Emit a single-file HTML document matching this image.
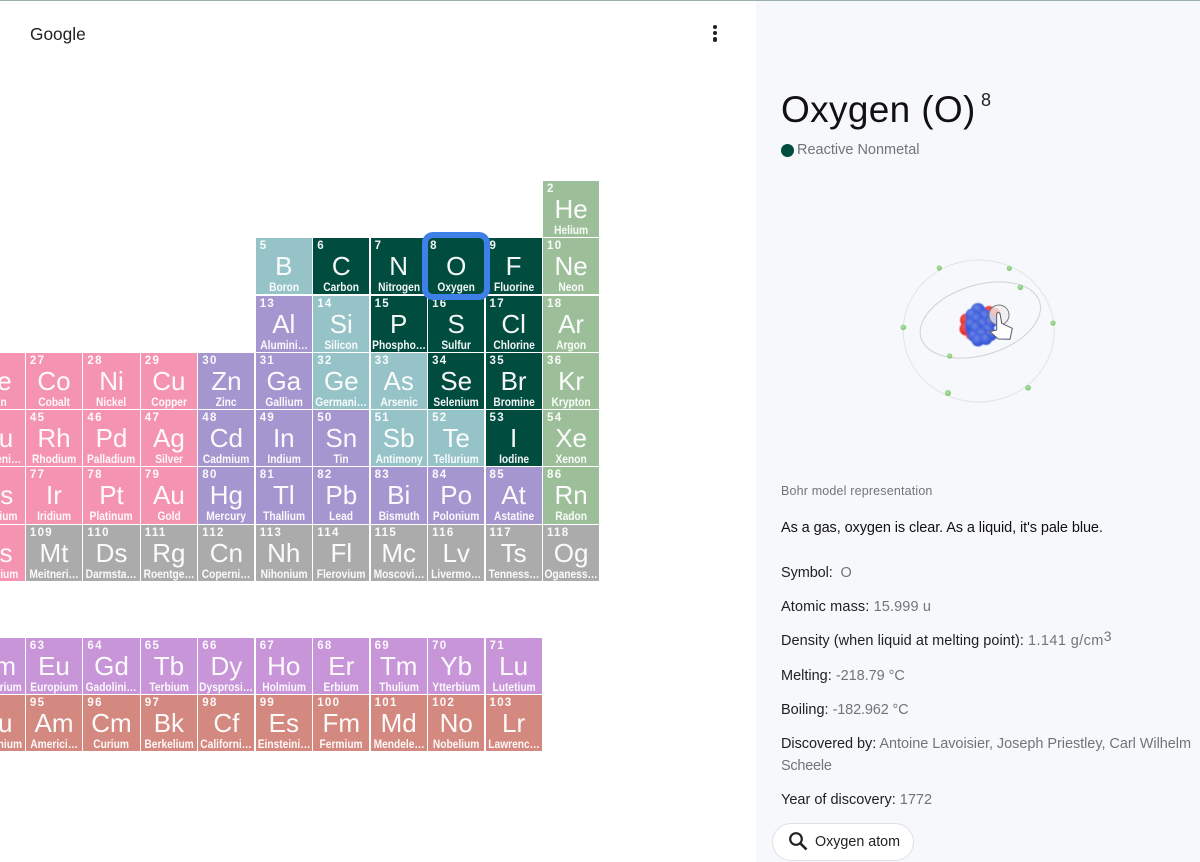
<!DOCTYPE html>
<html><head><meta charset="utf-8"><title>Oxygen</title>
<style>
html,body{margin:0;padding:0;width:1200px;height:862px;overflow:hidden;background:#fff;font-family:"Liberation Sans",sans-serif}
#top{position:absolute;left:0;top:0;width:1200px;height:1px;background:#9aafb0;z-index:5}
#g{position:absolute;left:30px;top:24px;font-size:17.3px;line-height:20px;color:#202124}
.dot{position:absolute;left:712.7px;width:4.6px;height:4.6px;border-radius:50%;background:#202124}
#panel{position:absolute;left:756px;top:0;width:444px;height:862px;background:#f7f8fb}
.c{position:absolute;width:56.2px;height:56.2px;color:#fff}
.c b{position:absolute;left:4px;top:2px;font:700 11.5px/13px "Liberation Sans",sans-serif;letter-spacing:1.3px;opacity:.95}
.c i{position:absolute;left:0;width:56.2px;top:13px;text-align:center;font:400 26px/30px "Liberation Sans",sans-serif;opacity:.96}
.c u{position:absolute;left:-7px;width:70.2px;top:42px;text-align:center;text-decoration:none;font:700 12px/14px "Liberation Sans",sans-serif;transform:scaleX(.85);white-space:nowrap;opacity:.95}
.k0{left:543px}.k1{left:485.5px}.k2{left:428.1px}.k3{left:370.6px}.k4{left:313.2px}.k5{left:255.7px}.k6{left:198.3px}.k7{left:140.8px}.k8{left:83.4px}.k9{left:25.9px}.k10{left:-31.5px}
.r0{top:181px}.r1{top:238.2px}.r2{top:295.5px}.r3{top:352.8px}.r4{top:410.1px}.r5{top:467.4px}.r6{top:524.7px}.r8{top:638px}.r9{top:695.2px}
.pk{background:#f594b0}.pu{background:#a596cf}.te{background:#95c3c7}.dk{background:#004d40}.gn{background:#9cbf9a}.gy{background:#ababab}.la{background:#c795d8}.ac{background:#d38880}
#sel{position:absolute;left:422px;top:232px;width:56px;height:56px;border:6px solid #3f80e8;border-radius:11px;z-index:3}
.t{position:absolute;left:781px;font-size:14.5px;line-height:20px;color:#202124;white-space:nowrap}
.t span{color:#70757a}
sup{font-size:14px;line-height:0;vertical-align:baseline;position:relative;top:-4px;letter-spacing:0}
</style></head><body>
<div id="top"></div>
<div id="g">Google</div>
<div class="dot" style="top:24.5px"></div><div class="dot" style="top:30.7px"></div><div class="dot" style="top:37px"></div>
<div id="panel"></div>

<div class="c k0 r0 gn"><b>2</b><i>He</i><u>Helium</u></div>

<div class="c k5 r1 te"><b>5</b><i>B</i><u>Boron</u></div>
<div class="c k4 r1 dk"><b>6</b><i>C</i><u>Carbon</u></div>
<div class="c k3 r1 dk"><b>7</b><i>N</i><u>Nitrogen</u></div>
<div class="c k2 r1 dk"><b style="left:2px">8</b><i>O</i><u>Oxygen</u></div>
<div class="c k1 r1 dk"><b>9</b><i>F</i><u>Fluorine</u></div>
<div class="c k0 r1 gn"><b>10</b><i>Ne</i><u>Neon</u></div>

<div class="c k5 r2 pu"><b>13</b><i>Al</i><u>Alumini…</u></div>
<div class="c k4 r2 te"><b>14</b><i>Si</i><u>Silicon</u></div>
<div class="c k3 r2 dk"><b>15</b><i>P</i><u>Phospho…</u></div>
<div class="c k2 r2 dk"><b>16</b><i>S</i><u>Sulfur</u></div>
<div class="c k1 r2 dk"><b>17</b><i>Cl</i><u>Chlorine</u></div>
<div class="c k0 r2 gn"><b>18</b><i>Ar</i><u>Argon</u></div>

<div class="c k10 r3 pk"><b>26</b><i>Fe</i><u>Iron</u></div>
<div class="c k9 r3 pk"><b>27</b><i>Co</i><u>Cobalt</u></div>
<div class="c k8 r3 pk"><b>28</b><i>Ni</i><u>Nickel</u></div>
<div class="c k7 r3 pk"><b>29</b><i>Cu</i><u>Copper</u></div>
<div class="c k6 r3 pu"><b>30</b><i>Zn</i><u>Zinc</u></div>
<div class="c k5 r3 pu"><b>31</b><i>Ga</i><u>Gallium</u></div>
<div class="c k4 r3 te"><b>32</b><i>Ge</i><u>Germani…</u></div>
<div class="c k3 r3 te"><b>33</b><i>As</i><u>Arsenic</u></div>
<div class="c k2 r3 dk"><b>34</b><i>Se</i><u>Selenium</u></div>
<div class="c k1 r3 dk"><b>35</b><i>Br</i><u>Bromine</u></div>
<div class="c k0 r3 gn"><b>36</b><i>Kr</i><u>Krypton</u></div>

<div class="c k10 r4 pk"><b>44</b><i>Ru</i><u>Rutheni…</u></div>
<div class="c k9 r4 pk"><b>45</b><i>Rh</i><u>Rhodium</u></div>
<div class="c k8 r4 pk"><b>46</b><i>Pd</i><u>Palladium</u></div>
<div class="c k7 r4 pk"><b>47</b><i>Ag</i><u>Silver</u></div>
<div class="c k6 r4 pu"><b>48</b><i>Cd</i><u>Cadmium</u></div>
<div class="c k5 r4 pu"><b>49</b><i>In</i><u>Indium</u></div>
<div class="c k4 r4 pu"><b>50</b><i>Sn</i><u>Tin</u></div>
<div class="c k3 r4 te"><b>51</b><i>Sb</i><u>Antimony</u></div>
<div class="c k2 r4 te"><b>52</b><i>Te</i><u>Tellurium</u></div>
<div class="c k1 r4 dk"><b>53</b><i>I</i><u>Iodine</u></div>
<div class="c k0 r4 gn"><b>54</b><i>Xe</i><u>Xenon</u></div>

<div class="c k10 r5 pk"><b>76</b><i>Os</i><u>Osmium</u></div>
<div class="c k9 r5 pk"><b>77</b><i>Ir</i><u>Iridium</u></div>
<div class="c k8 r5 pk"><b>78</b><i>Pt</i><u>Platinum</u></div>
<div class="c k7 r5 pk"><b>79</b><i>Au</i><u>Gold</u></div>
<div class="c k6 r5 pu"><b>80</b><i>Hg</i><u>Mercury</u></div>
<div class="c k5 r5 pu"><b>81</b><i>Tl</i><u>Thallium</u></div>
<div class="c k4 r5 pu"><b>82</b><i>Pb</i><u>Lead</u></div>
<div class="c k3 r5 pu"><b>83</b><i>Bi</i><u>Bismuth</u></div>
<div class="c k2 r5 pu"><b>84</b><i>Po</i><u>Polonium</u></div>
<div class="c k1 r5 pu"><b>85</b><i>At</i><u>Astatine</u></div>
<div class="c k0 r5 gn"><b>86</b><i>Rn</i><u>Radon</u></div>

<div class="c k10 r6 pk"><b>108</b><i>Hs</i><u>Hassium</u></div>
<div class="c k9 r6 gy"><b>109</b><i>Mt</i><u>Meitneri…</u></div>
<div class="c k8 r6 gy"><b>110</b><i>Ds</i><u>Darmsta…</u></div>
<div class="c k7 r6 gy"><b>111</b><i>Rg</i><u>Roentge…</u></div>
<div class="c k6 r6 gy"><b>112</b><i>Cn</i><u>Coperni…</u></div>
<div class="c k5 r6 gy"><b>113</b><i>Nh</i><u>Nihonium</u></div>
<div class="c k4 r6 gy"><b>114</b><i>Fl</i><u>Flerovium</u></div>
<div class="c k3 r6 gy"><b>115</b><i>Mc</i><u>Moscovi…</u></div>
<div class="c k2 r6 gy"><b>116</b><i>Lv</i><u>Livermo…</u></div>
<div class="c k1 r6 gy"><b>117</b><i>Ts</i><u>Tenness…</u></div>
<div class="c k0 r6 gy"><b>118</b><i>Og</i><u>Oganess…</u></div>

<div class="c k10 r8 la"><b>62</b><i>Sm</i><u>Samarium</u></div>
<div class="c k9 r8 la"><b>63</b><i>Eu</i><u>Europium</u></div>
<div class="c k8 r8 la"><b>64</b><i>Gd</i><u>Gadolini…</u></div>
<div class="c k7 r8 la"><b>65</b><i>Tb</i><u>Terbium</u></div>
<div class="c k6 r8 la"><b>66</b><i>Dy</i><u>Dysprosi…</u></div>
<div class="c k5 r8 la"><b>67</b><i>Ho</i><u>Holmium</u></div>
<div class="c k4 r8 la"><b>68</b><i>Er</i><u>Erbium</u></div>
<div class="c k3 r8 la"><b>69</b><i>Tm</i><u>Thulium</u></div>
<div class="c k2 r8 la"><b>70</b><i>Yb</i><u>Ytterbium</u></div>
<div class="c k1 r8 la"><b>71</b><i>Lu</i><u>Lutetium</u></div>

<div class="c k10 r9 ac"><b>94</b><i>Pu</i><u>Plutonium</u></div>
<div class="c k9 r9 ac"><b>95</b><i>Am</i><u>Americi…</u></div>
<div class="c k8 r9 ac"><b>96</b><i>Cm</i><u>Curium</u></div>
<div class="c k7 r9 ac"><b>97</b><i>Bk</i><u>Berkelium</u></div>
<div class="c k6 r9 ac"><b>98</b><i>Cf</i><u>Californi…</u></div>
<div class="c k5 r9 ac"><b>99</b><i>Es</i><u>Einsteini…</u></div>
<div class="c k4 r9 ac"><b>100</b><i>Fm</i><u>Fermium</u></div>
<div class="c k3 r9 ac"><b>101</b><i>Md</i><u>Mendele…</u></div>
<div class="c k2 r9 ac"><b>102</b><i>No</i><u>Nobelium</u></div>
<div class="c k1 r9 ac"><b>103</b><i>Lr</i><u>Lawrenc…</u></div>

<div id="sel"></div>

<div style="position:absolute;left:781px;top:88px;font-size:37px;line-height:44px;letter-spacing:.35px;color:#111;white-space:nowrap">Oxygen (O)</div>
<div style="position:absolute;left:981px;top:90px;font-size:18px;line-height:20px;color:#202124">8</div>
<div style="position:absolute;left:781px;top:143.5px;width:13px;height:13px;border-radius:50%;background:#004d40"></div>
<div class="t" style="left:797px;top:140px;color:#70757a">Reactive Nonmetal</div>

<svg style="position:absolute;left:880px;top:240px" width="200" height="180" viewBox="880 240 200 180">
<defs>
<radialGradient id="bl" cx=".4" cy=".35" r=".7"><stop offset="0" stop-color="#6c86e6"/><stop offset=".6" stop-color="#3f5edb"/><stop offset="1" stop-color="#3150d4"/></radialGradient>
<radialGradient id="rd" cx=".4" cy=".35" r=".7"><stop offset="0" stop-color="#f0554b"/><stop offset="1" stop-color="#e0201a"/></radialGradient>
<radialGradient id="el" cx=".45" cy=".4" r=".6"><stop offset="0" stop-color="#b5e3a6"/><stop offset="1" stop-color="#76c46a"/></radialGradient>
<filter id="sf" x="-20%" y="-20%" width="140%" height="140%"><feGaussianBlur stdDeviation=".6"/></filter>
</defs>
<ellipse cx="978.7" cy="331" rx="75.5" ry="71" fill="none" stroke="#e1e4e5" stroke-width="1"/>
<ellipse cx="980.3" cy="320" rx="62" ry="35" transform="rotate(-17 980.3 320)" fill="none" stroke="#cfd2d3" stroke-width="1"/>
<g fill="url(#el)">
<circle cx="939.3" cy="268" r="2.6"/><circle cx="1009.3" cy="268.3" r="2.6"/><circle cx="1020.3" cy="287.3" r="2.8"/><circle cx="1053" cy="323" r="2.6"/><circle cx="1028" cy="387.7" r="2.8"/><circle cx="948" cy="393" r="3"/><circle cx="903.3" cy="327.3" r="2.8"/><circle cx="949.7" cy="356" r="2.6"/>
</g>
<g filter="url(#sf)">
<g fill="url(#rd)">
<circle cx="966.5" cy="320" r="6.5"/><circle cx="966" cy="329" r="6.5"/><circle cx="971" cy="335" r="5"/><circle cx="989" cy="312" r="6"/><circle cx="995" cy="313" r="5"/>
</g>
<ellipse cx="979" cy="325" rx="14" ry="19" fill="#3f5cd8"/>
<g fill="url(#bl)">
<circle cx="978" cy="310" r="7"/><circle cx="972" cy="315" r="6.5"/><circle cx="985" cy="316" r="6.5"/><circle cx="977" cy="319" r="6.5"/><circle cx="971" cy="324" r="6"/><circle cx="983" cy="324" r="6.5"/><circle cx="991" cy="322" r="6"/><circle cx="976" cy="328" r="6.5"/><circle cx="988" cy="330" r="6.5"/><circle cx="974" cy="336" r="6"/><circle cx="982" cy="334" r="6.5"/><circle cx="991" cy="335" r="6"/><circle cx="978" cy="340" r="6.5"/><circle cx="986" cy="339" r="6"/>
</g>
</g>
<circle cx="999" cy="315" r="10" fill="#f0eeee" fill-opacity=".75" stroke="#7b7b7b" stroke-width="1"/>
<path d="M996.7 313.5Q998.3 311.5 1000 313.5L1001.7 323.3L1012.3 328.3L1010 339.3L998.3 339L990 331.7L996.7 330Z" fill="#fff" stroke="#55586a" stroke-width="1" stroke-linejoin="round"/>
</svg>

<div class="t" style="top:480.5px;font-size:12.5px;color:#70757a;letter-spacing:.17px">Bohr model representation</div>
<div class="t" style="top:518px;color:#111;letter-spacing:-.09px">As a gas, oxygen is clear. As a liquid, it's pale blue.</div>
<div class="t" style="top:563px;letter-spacing:-.1px">Symbol:&nbsp; <span>O</span></div>
<div class="t" style="top:597px;letter-spacing:.12px">Atomic mass: <span>15.999 u</span></div>
<div class="t" style="top:631px;letter-spacing:.05px">Density (when liquid at melting point): <span style="letter-spacing:.4px">1.141 g/cm<sup>3</sup></span></div>
<div class="t" style="top:666px">Melting: <span style="letter-spacing:-.05px">-218.79 °C</span></div>
<div class="t" style="top:700px">Boiling: <span style="letter-spacing:-.15px">-182.962 °C</span></div>
<div class="t" style="top:734px;letter-spacing:-.05px">Discovered by: <span>Antoine Lavoisier, Joseph Priestley, Carl Wilhelm</span></div>
<div class="t" style="top:756px;letter-spacing:-.25px"><span>Scheele</span></div>
<div class="t" style="top:790px">Year of discovery: <span>1772</span></div>

<div style="position:absolute;left:772px;top:823px;width:140px;height:36px;border:1px solid #dfe1e5;border-radius:19px;background:#fff"></div>
<svg style="position:absolute;left:787px;top:830px" width="22" height="22" viewBox="0 0 22 22"><circle cx="9" cy="9" r="5.8" fill="none" stroke="#202124" stroke-width="2.2"/><path d="M13.2 13.2L19.5 19.5" stroke="#202124" stroke-width="2.6" fill="none"/></svg>
<div class="t" style="left:815px;top:832px;font-size:14.3px;color:#202124">Oxygen atom</div>
</body></html>
